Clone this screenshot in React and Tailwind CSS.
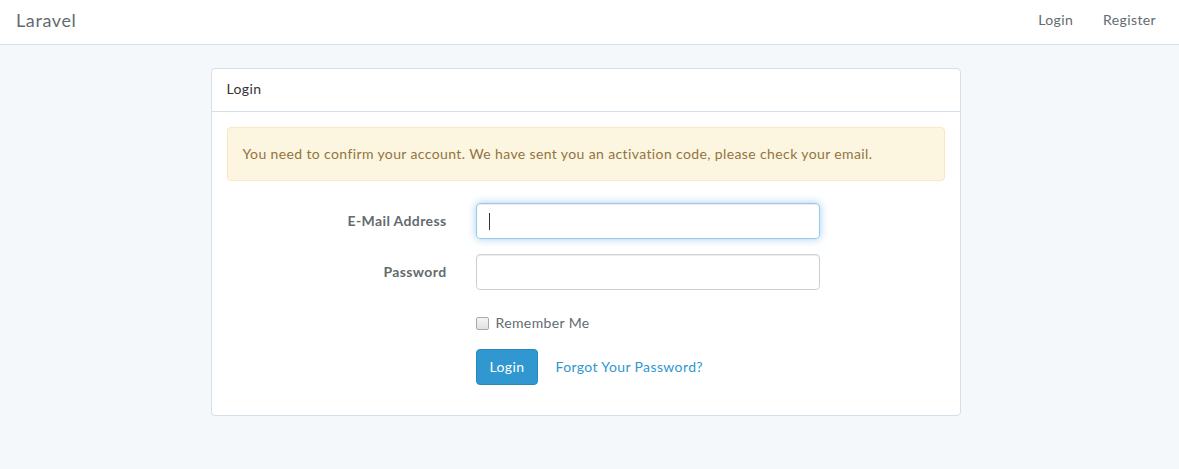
import React from "react";

export default function App() {
  return (
    <div
      className="min-h-[469px] bg-[#f5f8fa] text-[14px] leading-[1.6] text-[#636b6f] tracking-[0.38px]"
      style={{ fontFamily: "Lato, 'Open Sans', sans-serif" }}
    >
      <nav className="h-[45px] bg-white border-b border-[#d3e0e9] flex items-center justify-between">
        <a className="pl-[16px] text-[18px] text-[#636b6f] leading-[20px] pb-[4px] tracking-[0.6px]">Laravel</a>
        <div className="flex items-center pr-[23px]">
          <a className="px-[15px] text-[#636b6f] pb-[4px]">Login</a>
          <a className="pl-[15px] text-[#636b6f] pb-[4px]">Register</a>
        </div>
      </nav>

      <div className="pt-[23px] flex justify-center pr-[8px]">
        <div className="w-[750px] bg-white border border-[#d3e0e9] rounded-[4px] mb-[22px]">
          <div className="h-[43px] px-[15px] flex items-center border-b border-[#d3e0e9] text-[#333] pb-[2px]">
            Login
          </div>
          <div className="p-[15px]">
            <div className="bg-[#fcf6e1] border border-[#f8e9c3] rounded-[4px] px-[15px] py-[15px] text-[#93733f] mb-[22px]">
              You need to confirm your account. We have sent you an activation code, please check your email.
            </div>
            <form className="flex flex-col">
              <div className="flex items-center mb-[15px]">
                <label className="w-[234px] pr-[14px] text-right font-bold">E-Mail Address</label>
                <div className="w-[344px] h-[36px] ml-[15px] border border-[#98cbe8] rounded-[4px] shadow-[inset_0_1px_1px_rgba(0,0,0,0.075),0_0_8px_rgba(102,175,233,0.6)] flex items-center px-[12px]">
                  <span className="w-[1px] h-[17px] bg-[#333]"></span>
                </div>
              </div>
              <div className="flex items-center mb-[15px]">
                <label className="w-[234px] pr-[14px] text-right font-bold">Password</label>
                <div className="w-[344px] h-[36px] ml-[15px] border border-[#ccd0d2] rounded-[4px] shadow-[inset_0_1px_1px_rgba(0,0,0,0.075)]"></div>
              </div>
              <div className="flex items-center h-[36px] mb-[8px] ml-[249px]">
                <span className="w-[13px] h-[13px] border border-[#a9a9a9] rounded-[2px] bg-gradient-to-b from-[#f5f5f5] to-[#e1e1e1] mr-[7px]"></span>
                <span>Remember Me</span>
              </div>
              <div className="flex items-center ml-[249px] mb-[15px]">
                <button
                  type="button"
                  className="h-[36px] px-[13px] bg-[#3097d1] border border-[#2a88bd] rounded-[4px] text-white tracking-[0.38px]"
                >
                  Login
                </button>
                <a className="ml-[17px] text-[#3097d1]">Forgot Your Password?</a>
              </div>
            </form>
          </div>
        </div>
      </div>
    </div>
  );
}
